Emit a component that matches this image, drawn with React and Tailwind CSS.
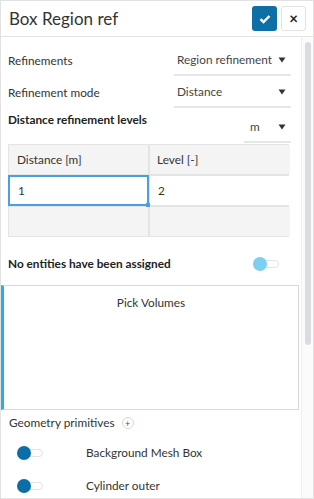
import React from "react";

function Caret() {
    return (
        <svg width="8" height="6" viewBox="0 0 8 6" className="shrink-0">
            <path d="M0.5 0.5 L7.5 0.5 L4 5.5 Z" fill="#333" />
        </svg>
    );
}

function Select({ value, className }) {
    return (
        <div
            className={
                "flex items-center justify-between h-[30px] border-b-2 border-[#e3e6ea] pl-[3px] pr-[5px] text-[11.8px] text-[#444] whitespace-nowrap " +
                className
            }
        >
            <span>{value}</span>
            <Caret />
        </div>
    );
}

function Toggle({ light }) {
    return (
        <div className="relative w-[26px] h-[14px] shrink-0">
            <div className="absolute left-[8px] top-[3px] w-[18px] h-[8px] rounded-full bg-white border border-[#e4e4e4]" />
            <div
                className={
                    "absolute left-0 top-0 w-[14px] h-[14px] rounded-full " +
                    (light ? "bg-[#7dcff0]" : "bg-[#0b6ea8]")
                }
            />
        </div>
    );
}

export default function App() {
    return (
        <div
            className="w-[314px] h-[499px] bg-white border border-[#e2e2e2] overflow-hidden flex flex-col text-[#333]"
            style={{ fontFamily: "Lato, 'Open Sans', sans-serif" }}
        >
            <div className="h-[36px] shrink-0 flex items-center justify-between pl-[8px] pr-[7px] border-b border-[#e4e4e4]">
                <h1 className="text-[17px] text-[#333]">Box Region ref</h1>
                <div className="flex gap-[4px]">
                    <button className="w-[25px] h-[25px] rounded-[3px] bg-[#0d6fa6] flex items-center justify-center">
                        <svg width="12" height="10" viewBox="0 0 12 10">
                            <path
                                d="M1.5 5.2 L4.5 8 L10.5 2"
                                stroke="#fff"
                                strokeWidth="2.4"
                                fill="none"
                            />
                        </svg>
                    </button>
                    <button className="w-[25px] h-[25px] rounded-[3px] border border-[#e2e2e2] flex items-center justify-center text-[15px] font-bold leading-none text-[#222]">
                        ×
                    </button>
                </div>
            </div>

            <div className="flex flex-1 min-h-0">
                <div className="flex-1 flex flex-col min-w-0">
                    <div className="pl-[7px] pr-[10px] pt-[8px] shrink-0 text-[11.8px]">
                        <div className="flex items-center justify-between h-[32px]">
                            <span>Refinements</span>
                            <Select value="Region refinement" className="w-[117px]" />
                        </div>
                        <div className="flex items-center justify-between h-[32px]">
                            <span>Refinement mode</span>
                            <Select value="Distance" className="w-[117px]" />
                        </div>
                        <div className="flex items-start justify-between h-[35px]">
                            <span className="mt-[2px] font-bold text-[#222]">
                                Distance refinement levels
                            </span>
                            <Select value="m" className="mt-[4px] w-[47px] pl-[6px]" />
                        </div>

                        <div className="w-[281px] grid grid-cols-[139px_140px] gap-[2px] bg-[#e4e4e4] border border-[#e4e4e4]">
                            <div className="h-[29px] bg-[#f4f4f4] flex items-center pl-[8px]">
                                Distance [m]
                            </div>
                            <div className="h-[29px] bg-[#f4f4f4] flex items-center pl-[7px]">
                                Level [-]
                            </div>
                            <div className="relative h-[29px] bg-white flex items-center pl-[9px] outline outline-[2px] -outline-offset-[1px] outline-[#4a9fe0]">
                                1
                                <span className="absolute -right-[2px] -bottom-[2px] w-[4px] h-[4px] bg-[#4a9fe0]" />
                            </div>
                            <div className="h-[29px] bg-white flex items-center pl-[8px]">2</div>
                            <div className="h-[29px] bg-[#f4f4f4]" />
                            <div className="h-[29px] bg-[#f4f4f4]" />
                        </div>

                        <div className="flex items-center justify-between h-[48px] pt-[6px] pr-[12px]">
                            <span className="font-bold text-[#222]">No entities have been assigned</span>
                            <Toggle light />
                        </div>
                    </div>

                    <div className="shrink-0 mr-[2px] h-[125px] border border-[#d6d8dc] border-l-[3px] border-l-[#22b2e6] flex justify-center pt-[9px]">
                        <span className="text-[11.8px] leading-[16px]">Pick Volumes</span>
                    </div>

                    <div className="shrink-0 flex items-center gap-[7px] pl-[8px] h-[26px] text-[11.8px]">
                        <span>Geometry primitives</span>
                        <span className="w-[12px] h-[12px] rounded-full border border-[#d8d8d8] flex items-center justify-center text-[9px] leading-none text-[#555]">
                            +
                        </span>
                    </div>

                    <div className="shrink-0 flex items-center h-[33px] pl-[16px] text-[11.8px]">
                        <Toggle />
                        <span className="ml-[43px]">Background Mesh Box</span>
                    </div>
                    <div className="shrink-0 flex items-center h-[33px] pl-[16px] text-[11.8px]">
                        <Toggle />
                        <span className="ml-[43px]">Cylinder outer</span>
                    </div>
                </div>

                <div className="w-[12px] shrink-0 pl-[3px] pr-[3px] pt-[5px] bg-[#fbfbfb] border-l border-[#efefef]">
                    <div className="w-[6px] h-[303px] rounded-full bg-[#d9dce0]" />
                </div>
            </div>
        </div>
    );
}
